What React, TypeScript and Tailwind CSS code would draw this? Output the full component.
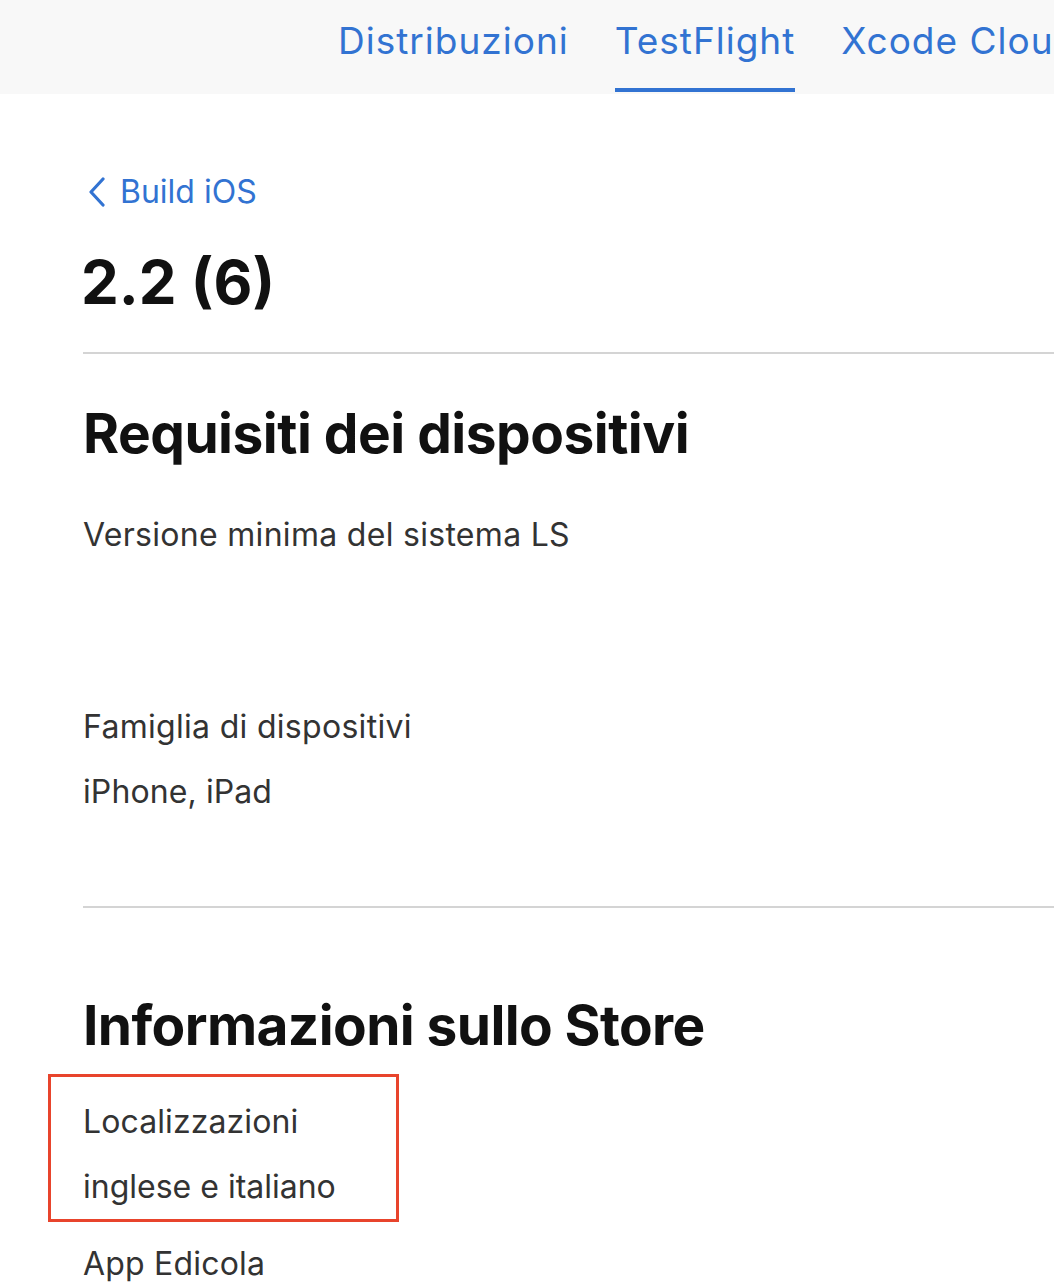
const tabs = [
  { label: "Distribuzioni", active: false },
  { label: "TestFlight", active: true },
  { label: "Xcode Cloud", active: false },
];

function Tab({ label, active }: { label: string; active: boolean }) {
  return (
    <div className="flex flex-col h-full shrink-0">
      <span className="mt-[18px] leading-[46px] text-[37px] tracking-[1px] text-[#3273d2] whitespace-nowrap">
        {label}
      </span>
      <div className={`mt-auto mb-[2px] h-[4px] ${active ? "bg-[#3273d2]" : "bg-transparent"}`} />
    </div>
  );
}

export default function App() {
  return (
    <div className="min-h-[1284px] bg-white font-['Inter','Noto_Sans',sans-serif] overflow-hidden">
      <div className="h-[94px] bg-[#f8f8f8] flex gap-[46px] pl-[338px] overflow-hidden">
        {tabs.map((t) => (
          <Tab key={t.label} label={t.label} active={t.active} />
        ))}
      </div>

      <div className="pl-[83px]">
        <a className="mt-[78px] flex items-center h-[40px] text-[#3273d2] text-[32px] leading-[40px]">
          <svg width="20" height="30" viewBox="0 0 20 30" className="ml-[4px] mr-[13px]">
            <polyline
              points="16,2 4,15 16,28"
              fill="none"
              stroke="#3273d2"
              strokeWidth="3.2"
              strokeLinecap="round"
              strokeLinejoin="round"
            />
          </svg>
          Build iOS
        </a>

        <h1 className="mt-[35px] -ml-[2px] text-[60px] leading-[70px] font-bold text-[#111]">2.2 (6)</h1>

        <div className="mt-[35px] h-[2px] bg-[#d4d4d4]" />

        <h2 className="mt-[47px] text-[55px] leading-[64px] font-bold tracking-[-0.5px] text-[#111]">
          Requisiti dei dispositivi
        </h2>

        <p className="mt-[50px] text-[32px] leading-[40px] tracking-[0.3px] text-[#333]">
          Versione minima del sistema LS
        </p>

        <p className="mt-[152px] text-[32px] leading-[40px] tracking-[0.3px] text-[#333]">
          Famiglia di dispositivi
        </p>
        <p className="mt-[25px] text-[32px] leading-[40px] tracking-[0.1px] text-[#333]">iPhone, iPad</p>

        <div className="mt-[94px] h-[2px] bg-[#d4d4d4]" />

        <h2 className="mt-[85px] text-[55px] leading-[64px] font-bold tracking-[-0.6px] text-[#111]">
          Informazioni sullo Store
        </h2>

        <div className="mt-[17px] -ml-[35px] w-[351px] border-[3px] border-[#e8442c] pl-[32px] pt-[25px] pb-[12px]">
          <p className="text-[32px] leading-[40px] tracking-[0.1px] text-[#333]">Localizzazioni</p>
          <p className="mt-[25px] text-[32px] leading-[40px] text-[#333]">inglese e italiano</p>
        </div>

        <p className="mt-[22px] text-[32px] leading-[40px] tracking-[0.2px] text-[#333]">App Edicola</p>
      </div>
    </div>
  );
}
